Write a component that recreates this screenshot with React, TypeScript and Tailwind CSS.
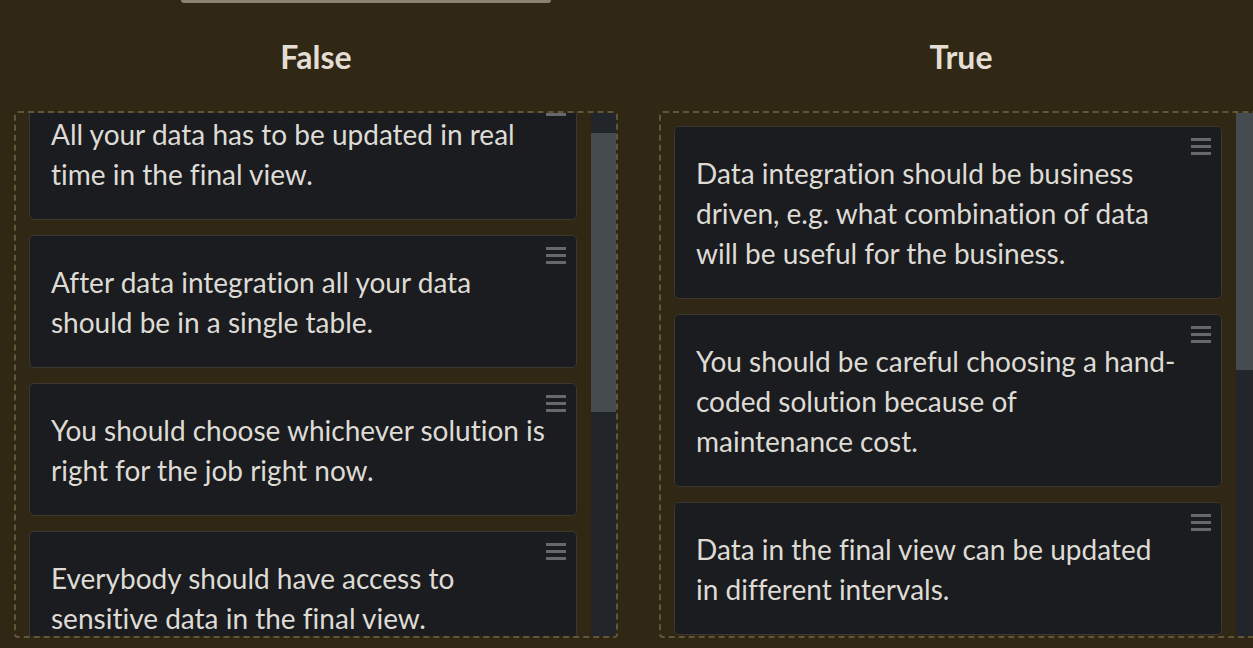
import React from "react";

const falseItems: string[][] = [
  ["All your data has to be updated in real", "time in the final view."],
  ["After data integration all your data", "should be in a single table."],
  ["You should choose whichever solution is", "right for the job right now."],
  ["Everybody should have access to", "sensitive data in the final view."],
];

const trueItems: string[][] = [
  ["Data integration should be business", "driven, e.g. what combination of data", "will be useful for the business."],
  ["You should be careful choosing a hand-", "coded solution because of", "maintenance cost."],
  ["Data in the final view can be updated", "in different intervals."],
];

function Handle() {
  return (
    <div className="absolute top-[11px] right-[10px] flex flex-col gap-[4px]">
      <div className="w-[20px] h-[3px] bg-[#66686b]" />
      <div className="w-[20px] h-[3px] bg-[#66686b]" />
      <div className="w-[20px] h-[3px] bg-[#66686b]" />
    </div>
  );
}

function Card({ lines }: { lines: string[] }) {
  return (
    <div className="relative shrink-0 rounded-[5px] border border-[#3a3830] bg-[#1b1c1f] pl-[21px] pr-[21px] pt-[26px] pb-[25px]">
      <Handle />
      {lines.map((l, i) => (
        <div
          key={i}
          className="whitespace-nowrap text-[28px] leading-[40px] text-[#dedbd5] [font-variant-ligatures:no-common-ligatures]"
        >
          {l}
        </div>
      ))}
    </div>
  );
}

function Column({
  title,
  items,
  offset,
  thumbTop,
  thumbHeight,
}: {
  title: string;
  items: string[][];
  offset: string;
  thumbTop: string;
  thumbHeight: string;
}) {
  return (
    <div className="w-[604px] shrink-0 flex flex-col">
      <div className="h-[36px] mt-[36px] text-center text-[32px] leading-[36px] font-bold text-[#e3ddd3]">
        {title}
      </div>
      <div className="mt-[36px] h-[527px] rounded-[4px] border-2 border-dashed border-[#625639] flex overflow-hidden">
        <div className="flex-1 overflow-hidden pl-[13px] pr-[14px] pt-[13px]">
          <div className={`flex flex-col gap-[15px] ${offset}`}>
            {items.map((it, i) => (
              <Card key={i} lines={it} />
            ))}
          </div>
        </div>
        <div className="w-[25px] shrink-0 bg-[#22262a] flex flex-col">
          <div className={`${thumbTop} ${thumbHeight} bg-[#464b4f]`} />
        </div>
      </div>
    </div>
  );
}

export default function App() {
  return (
    <div
      className="w-[1253px] h-[648px] overflow-hidden bg-[#302714]"
      style={{ fontFamily: "Lato, 'Noto Sans', sans-serif" }}
    >
      <div className="ml-[181px] w-[370px] h-[3px] rounded-b-[4px] bg-[#8b8370]" />
      <div className="flex gap-[41px] pl-[14px]">
        <Column title="False" items={falseItems} offset="mt-[-39px]" thumbTop="mt-[20px]" thumbHeight="h-[279px]" />
        <Column title="True" items={trueItems} offset="mt-0" thumbTop="mt-0" thumbHeight="h-[257px]" />
      </div>
    </div>
  );
}
